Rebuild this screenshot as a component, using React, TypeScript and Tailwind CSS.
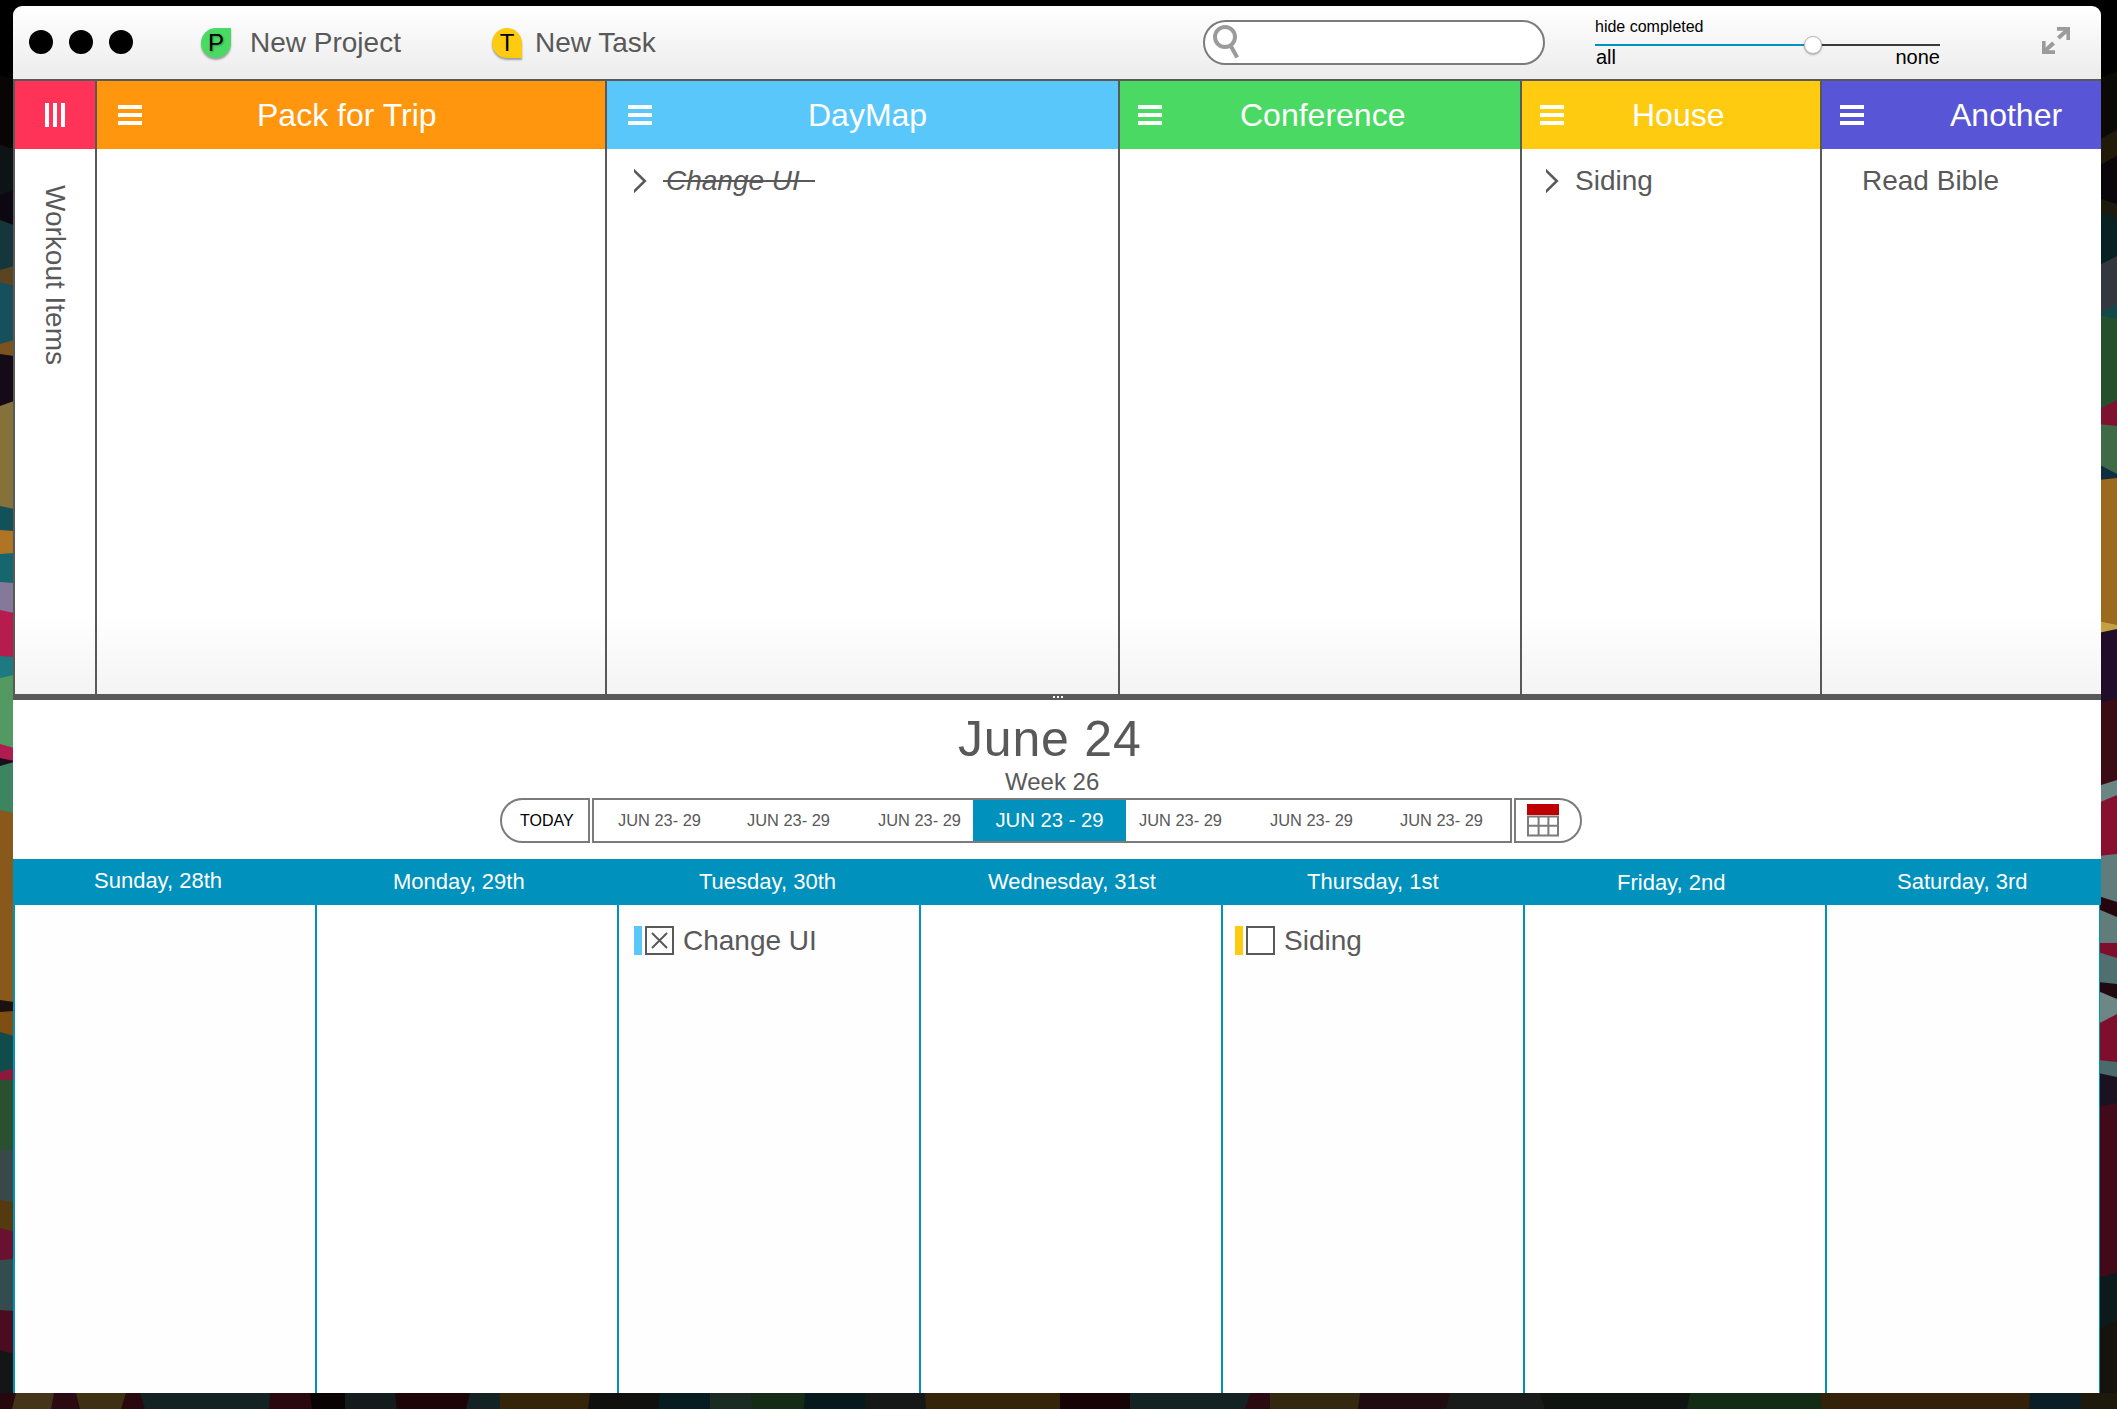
import React from "react";

type Band = [number, number, string];

const leftBands: Band[] = [
  [75, 70, "#080504"], [145, 50, "#0e1416"], [195, 25, "#0c0710"], [220, 50, "#15363b"],
  [270, 12, "#5a4520"], [282, 62, "#15505c"], [344, 10, "#7a5320"], [354, 52, "#140a18"],
  [406, 100, "#85713a"], [506, 24, "#12505a"], [530, 24, "#b07425"], [554, 28, "#15666f"],
  [582, 28, "#85799a"], [610, 46, "#b81c4e"], [656, 22, "#1c7a80"], [678, 66, "#539a62"],
  [744, 14, "#b01c50"], [758, 8, "#1a0d1c"], [766, 44, "#3c8560"], [810, 190, "#88591a"],
  [1000, 12, "#1b1210"], [1012, 20, "#7e4e12"], [1032, 40, "#0f4c4b"], [1072, 8, "#8a1a3c"],
  [1080, 70, "#29502f"], [1150, 50, "#384948"], [1200, 28, "#55390f"], [1228, 32, "#6a1030"],
  [1260, 50, "#344c4d"], [1310, 40, "#4b0c20"], [1350, 59, "#131517"],
];

const rightBands: Band[] = [
  [75, 60, "#0b0904"], [135, 26, "#211a08"], [161, 40, "#0a0509"], [201, 14, "#1c1a0c"],
  [215, 46, "#082224"], [261, 48, "#33383f"], [309, 8, "#0f4a48"], [317, 88, "#264f2d"],
  [405, 20, "#7e1030"], [425, 44, "#3f6a45"], [469, 10, "#0f2e40"], [479, 144, "#9c6a1f"],
  [623, 8, "#c5a040"], [631, 70, "#200d2a"], [701, 82, "#3b0c14"], [783, 16, "#6a8583"],
  [799, 56, "#87102f"], [855, 44, "#607d7b"], [899, 14, "#25060d"], [913, 30, "#607d7b"],
  [943, 12, "#7d0e2c"], [955, 28, "#4f706e"], [983, 12, "#220911"], [995, 24, "#6c8785"],
  [1019, 42, "#7d0e2c"], [1061, 14, "#4a6b69"], [1075, 30, "#1a1220"], [1105, 170, "#43081a"],
  [1275, 50, "#0c1a1c"], [1325, 84, "#15130c"],
];

const bottomBands: Band[] = [
  [0, 16, "#25070d"], [16, 38, "#44341a"], [54, 22, "#2c0a12"], [76, 50, "#3d3013"],
  [126, 14, "#2a0810"], [140, 130, "#152224"], [270, 40, "#2a0810"], [310, 35, "#0a0303"],
  [345, 50, "#131b1c"], [395, 75, "#1c0407"], [470, 30, "#152224"], [500, 90, "#33240a"],
  [590, 70, "#10100f"], [660, 50, "#061c20"], [710, 40, "#1b2a23"], [750, 55, "#152b16"],
  [805, 60, "#07191c"], [865, 60, "#161717"], [925, 135, "#33240a"], [1060, 70, "#150305"],
  [1130, 120, "#152224"], [1250, 20, "#2c0a12"], [1270, 90, "#332810"], [1360, 90, "#1f0c11"],
  [1450, 90, "#191a1a"], [1540, 150, "#101410"], [1690, 130, "#132a15"], [1820, 210, "#33210a"],
  [2030, 50, "#0b1e25"], [2080, 37, "#1e190d"],
];

const slant = (y: number, i: number) => ((y + i * 7) % 11) - 5;

function Wallpaper() {
  return (
    <svg className="absolute inset-0" width="2117" height="1409" viewBox="0 0 2117 1409">
      <rect width="2117" height="1409" fill="#000" />
      {leftBands.map(([y, h, c], i) => (
        <path key={y} fill={c} d={`M0 ${y} L14 ${y + slant(y, i)} V${y + h + 6} H0Z`} />
      ))}
      {rightBands.map(([y, h, c], i) => (
        <path key={y} fill={c} d={`M2098 ${y + slant(y, i)} L2117 ${y - slant(y, i)} V${y + h + 8} H2098Z`} />
      ))}
      {bottomBands.map(([x, w, c], i) => (
        <path key={x} fill={c} d={`M${x} 1393 H${x + w + 6} V1409 H${x + slant(x, i)}Z`} />
      ))}
    </svg>
  );
}

function Burger({ className }: { className: string }) {
  return (
    <div className={`flex h-5 w-6 shrink-0 flex-col justify-between ${className}`}>
      <div className="h-1 bg-white" />
      <div className="h-1 bg-white" />
      <div className="h-1 bg-white" />
    </div>
  );
}

function Chevron({ className }: { className: string }) {
  return (
    <svg className={`shrink-0 ${className}`} width="13" height="24" viewBox="0 0 13 24">
      <path d="M-1 0.5 L10.8 12 L-1 23.5" fill="none" stroke="#5a5a5a" strokeWidth="2.6" />
    </svg>
  );
}

interface ColumnProps {
  title: string;
  width: string;
  color: string;
  burger: string;
  titleGap: string;
  children?: React.ReactNode;
}

function Column({ title, width, color, burger, titleGap, children }: ColumnProps) {
  return (
    <div className={`flex shrink-0 flex-col border-l-2 border-[#595959] ${width}`}>
      <div className={`flex h-[68px] items-center ${color}`}>
        <Burger className={burger} />
        <div className={`text-[32px] leading-[68px] text-white ${titleGap}`}>{title}</div>
      </div>
      <div className="flex h-16 items-center">{children}</div>
    </div>
  );
}

function TitleBar() {
  return (
    <div className="flex h-[73px] shrink-0 items-center rounded-t-[9px] bg-linear-to-b from-white to-[#ececec] text-[#595959]">
      <div className="mb-px ml-4 flex gap-4">
        <div className="size-6 rounded-full bg-black" />
        <div className="size-6 rounded-full bg-black" />
        <div className="size-6 rounded-full bg-black" />
      </div>
      <div className="ml-[68px] flex size-[30px] items-center justify-center rounded-full rounded-tr-none bg-[#4ada64] text-2xl leading-none text-black shadow-[0_2px_2px_rgba(0,0,0,0.35)]">
        <span className="text-shadow-[1px_1px_2px_rgba(0,0,0,0.3)]">P</span>
      </div>
      <div className="ml-[19px] w-[239px] text-[28px]">New Project</div>
      <div className="mt-px ml-[3px] flex size-[30px] items-center justify-center rounded-full rounded-br-none bg-[#fecb11] text-2xl leading-none text-black shadow-[0_2px_2px_rgba(0,0,0,0.35)]">
        T
      </div>
      <div className="ml-[13px] w-[668px] text-[28px]">New Task</div>
      <div className="h-[45px] w-[342px] shrink-0 rounded-[23px] border-2 border-[#7b7b7b] bg-white">
        <svg width="40" height="41" viewBox="1205 22 40 41">
          <circle cx="1225" cy="37" r="10" fill="none" stroke="#9b9b9b" strokeWidth="4" />
          <path d="M1230 44.5 L1237.2 57.5" stroke="#9b9b9b" strokeWidth="4" />
        </svg>
      </div>
      <div className="ml-[50px] flex h-[60px] w-[345px] shrink-0 flex-col text-black">
        <div className="mt-0.5 h-6 text-base leading-6">hide completed</div>
        <div className="relative mt-[5px] flex h-0.5">
          <div className="w-[217px] bg-[#0093c0]" />
          <div className="flex-1 bg-[#3a3a3a]" />
          <div className="absolute -top-2 left-[209px] size-[18px] rounded-full border border-[#b5b5b5] bg-white shadow-[0_1px_2px_rgba(0,0,0,0.3)]" />
        </div>
        <div className="flex justify-between pl-px text-xl leading-[22px]">
          <span>all</span>
          <span>none</span>
        </div>
      </div>
      <svg className="mb-1 ml-[102px]" width="28" height="27" viewBox="0 0 28 27">
        <path fill="#9b9b9b" d="M15 0H28V13H24.4V6.4L17.8 12.4L15 9.4L21.4 3.7H15Z" />
        <path fill="#9b9b9b" d="M13 27H0V14H3.6V20.6L10.2 14.6L13 17.6L6.6 23.3H13Z" />
      </svg>
    </div>
  );
}

function Projects() {
  return (
    <div className="flex h-[615px] shrink-0 overflow-hidden border-t-2 border-[#595959] bg-linear-to-b from-white from-87% to-[#f4f4f4]">
      <div className="flex w-[82px] shrink-0 flex-col items-center border-l-2 border-[#595959]">
        <div className="flex h-[68px] w-full items-center justify-center gap-1 bg-[#ff3257]">
          <div className="h-6 w-1 bg-white" />
          <div className="h-6 w-1 bg-white" />
          <div className="h-6 w-1 bg-white" />
        </div>
        <div className="mt-9 text-[28px] leading-8 [writing-mode:vertical-rl]">Workout Items</div>
      </div>
      <Column title="Pack for Trip" width="w-[510px]" color="bg-[#ff960e]" burger="ml-[21px]" titleGap="ml-[115px]" />
      <Column title="DayMap" width="w-[513px]" color="bg-[#5ac7fb]" burger="ml-[21px]" titleGap="ml-[156px]">
        <Chevron className="ml-[27px]" />
        <div className="relative ml-[19px] text-[28px] italic">
          Change UI
          <div className="absolute -left-[3px] top-[20px] h-0.5 w-[152px] bg-[#595959]" />
        </div>
      </Column>
      <Column title="Conference" width="w-[402px]" color="bg-[#4ada64]" burger="ml-[18px]" titleGap="ml-[78px]" />
      <Column title="House" width="w-[300px]" color="bg-[#fecb11]" burger="ml-[18px]" titleGap="ml-[68px]">
        <Chevron className="ml-6" />
        <div className="ml-4 text-[28px]">Siding</div>
      </Column>
      <Column title="Another" width="w-[281px]" color="bg-[#5856d6]" burger="ml-[18px]" titleGap="ml-[86px]">
        <div className="ml-10 text-[28px]">Read Bible</div>
      </Column>
    </div>
  );
}

function CalendarIcon() {
  return (
    <svg width="32" height="33" viewBox="0 0 32 33">
      <rect width="32" height="11" fill="#be0000" />
      <path d="M1 12.5H31V31.5H1ZM1 21.8H31M11.6 12V32M21.4 12V32" fill="none" stroke="#7b7b7b" strokeWidth="2" />
    </svg>
  );
}

function WeekNav() {
  return (
    <div className="mt-[3px] ml-[487px] flex h-[45px] gap-0.5 text-[16.4px]">
      <div className="w-[90px] rounded-l-[23px] border-2 border-[#7b7b7b] bg-white pl-[18px] text-base leading-[41px] text-black">TODAY</div>
      <div className="flex w-[920px] border-2 border-[#7b7b7b] bg-white leading-[41px] whitespace-nowrap">
        <div className="w-[129px] pl-6">JUN 23- 29</div>
        <div className="w-[131px] pl-6">JUN 23- 29</div>
        <div className="w-[119px] pl-6">JUN 23- 29</div>
        <div className="w-[153px] bg-[#0091bd] text-center text-[20.3px] text-white">JUN 23 - 29</div>
        <div className="w-[131px] pl-[13px]">JUN 23- 29</div>
        <div className="w-[130px] pl-[13px]">JUN 23- 29</div>
        <div className="w-[120px] pl-[13px]">JUN 23- 29</div>
      </div>
      <div className="flex w-[68px] items-center rounded-r-[23px] border-2 border-[#7b7b7b] bg-white pl-[11px]">
        <CalendarIcon />
      </div>
    </div>
  );
}

const days = [
  { name: "Sunday, 28th", cls: "w-[300px] pl-[81px] leading-[44px]" },
  { name: "Monday, 29th", cls: "w-[302px] pl-[80px] leading-[46px]" },
  { name: "Tuesday, 30th", cls: "w-[302px] pl-[84px] leading-[46px]" },
  { name: "Wednesday, 31st", cls: "w-[302px] pl-[71px] leading-[46px]" },
  { name: "Thursday, 1st", cls: "w-[302px] pl-[88px] leading-[46px]" },
  { name: "Friday, 2nd", cls: "w-[302px] pl-[96px] leading-[47px]" },
  { name: "Saturday, 3rd", cls: "w-[276px] pl-[74px] leading-[45px]" },
];

function DayTask({ color, label, checked, className }: { color: string; label: string; checked?: boolean; className: string }) {
  return (
    <div className={`flex h-[29px] items-center ${className}`}>
      <div className={`h-full w-2 ${color}`} />
      <div className="ml-[3px] flex size-[29px] items-center justify-center border-2 border-[#595959] bg-white">
        {checked && (
          <svg width="17" height="17" viewBox="0 0 17 17">
            <path d="M1 1L16 16M16 1L1 16" stroke="#595959" strokeWidth="2" />
          </svg>
        )}
      </div>
      <div className="ml-[9px] text-[28px] leading-[29px]">{label}</div>
    </div>
  );
}

function Calendar() {
  return (
    <div className="flex flex-1 flex-col">
      <div className="flex h-[159px] shrink-0 flex-col bg-white">
        <div className="mt-[11px] mb-px pl-[945px] text-[50px] leading-[56px] tracking-[0.8px]">June 24</div>
        <div className="pt-px pl-[992px] text-2xl leading-[26px]">Week 26</div>
        <WeekNav />
      </div>
      <div className="flex h-[46px] shrink-0 bg-[#0091bd] text-[22px] whitespace-nowrap text-white">
        {days.map((d) => (
          <div key={d.name} className={`shrink-0 ${d.cls}`}>{d.name}</div>
        ))}
      </div>
      <div className="mr-px flex flex-1 border-r border-[#0091bd] [&>div]:w-[302px] [&>div]:shrink-0 [&>div]:border-l-2 [&>div]:border-[#0091bd] [&>div]:bg-white [&>div:last-child]:w-auto [&>div:last-child]:flex-1 [&>div:nth-child(odd)]:bg-[#fefefe]">
        <div />
        <div />
        <div>
          <DayTask className="mt-[21px] ml-[15px]" color="bg-[#5ac7fb]" label="Change UI" checked />
        </div>
        <div />
        <div>
          <DayTask className="mt-[21px] ml-3" color="bg-[#fecb11]" label="Siding" />
        </div>
        <div />
        <div />
      </div>
    </div>
  );
}

export default function App() {
  return (
    <div className="relative flex h-[1409px] w-[2117px] overflow-hidden font-['Liberation_Sans',Arial,sans-serif] text-[#595959]">
      <Wallpaper />
      <div className="relative mt-1.5 ml-[13px] flex h-[1387px] w-[2088px] flex-col">
        <TitleBar />
        <Projects />
        <div className="flex h-1.5 shrink-0 justify-center gap-0.5 bg-[#595959] pt-0.5 pl-0.5">
          <div className="size-0.5 bg-white" />
          <div className="size-0.5 bg-white" />
          <div className="size-0.5 bg-white" />
        </div>
        <Calendar />
      </div>
    </div>
  );
}
